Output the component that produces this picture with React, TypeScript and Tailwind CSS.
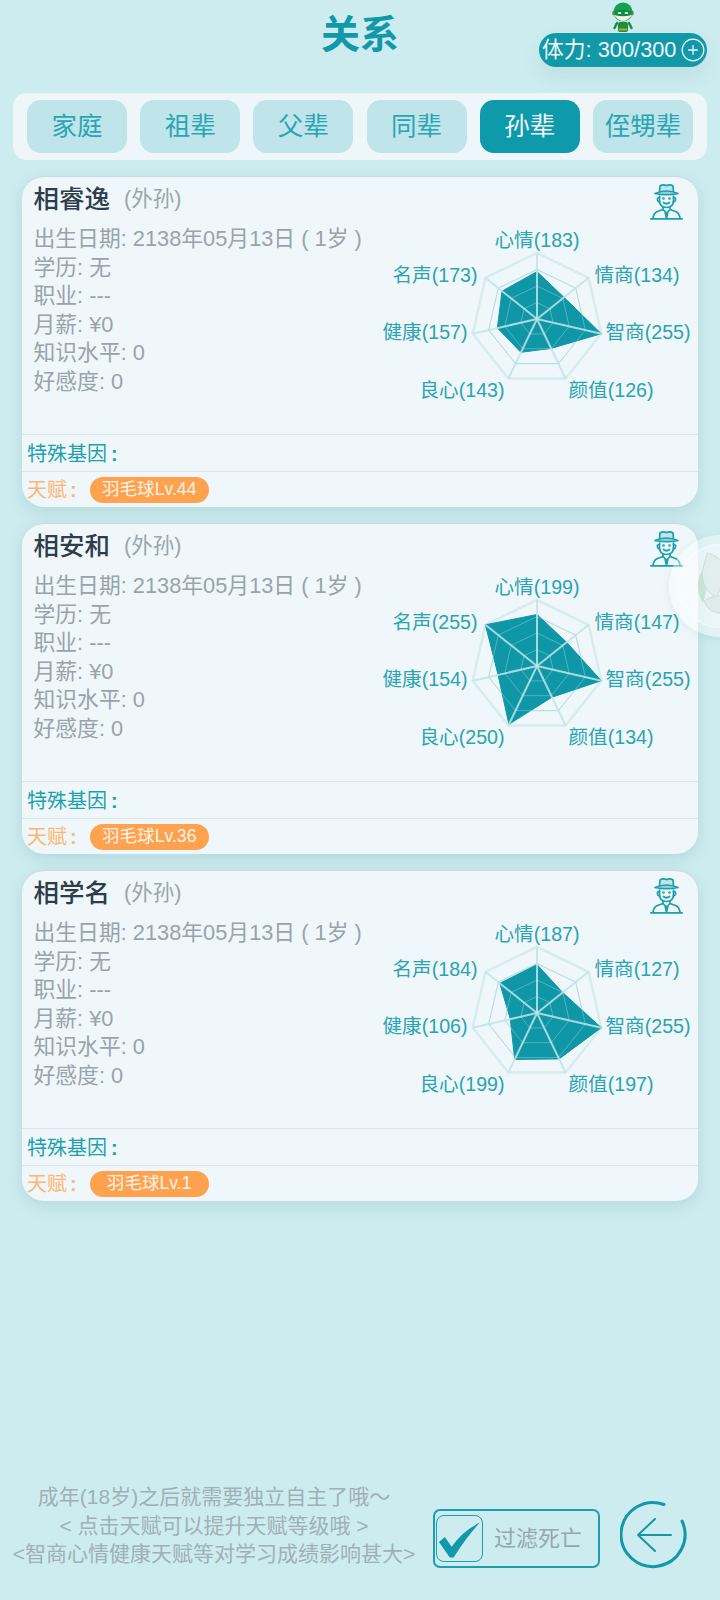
import { CirclePlus } from 'lucide-react';

const tabs = ['家庭', '祖辈', '父辈', '同辈', '孙辈', '侄甥辈'];
const axes = ['心情', '情商', '智商', '颜值', '良心', '健康', '名声'];
// label centres inside the chart box
const labelPos = [
  [169, 62.5],
  [269, 97.5],
  [280, 154.5],
  [243, 212.5],
  [94, 212.5],
  [57, 154.5],
  [67, 97.5],
];

const people = [
  { name: '相睿逸', talent: '羽毛球Lv.44', stats: [183, 134, 255, 126, 143, 157, 173] },
  { name: '相安和', talent: '羽毛球Lv.36', stats: [199, 147, 255, 134, 250, 154, 255] },
  { name: '相学名', talent: '羽毛球Lv.1', stats: [187, 127, 255, 197, 199, 106, 184] },
];

const CX = 169;
const CY = 142;
const R = 66;

function pt(i: number, f: number) {
  const a = ((-90 + (i * 360) / 7) * Math.PI) / 180;
  return `${(CX + Math.cos(a) * R * f).toFixed(1)},${(CY + Math.sin(a) * R * f).toFixed(1)}`;
}

function ring(f: number) {
  return axes.map((_, i) => pt(i, f)).join(' ');
}

function Radar({ stats }: { stats: number[] }) {
  return (
    <svg width="330" height="258" viewBox="0 0 330 258" className="shrink-0">
      <polygon points={ring(1)} fill="none" stroke="#d6ecef" strokeWidth="2.5" />
      {[0.25, 0.5, 0.75].map((f) => (
        <polygon key={f} points={ring(f)} fill="none" stroke="#d6ecef" strokeWidth="1.2" />
      ))}
      <polygon points={stats.map((v, i) => pt(i, v / 255)).join(' ')} fill="#0f97a8" stroke="#0f97a8" strokeWidth="1" />
      {[0.25, 0.5, 0.75].map((f) => (
        <polygon key={f} points={ring(f)} fill="none" stroke="#8fd0d9" strokeOpacity="0.5" strokeWidth="1" />
      ))}
      {axes.map((a, i) => (
        <polyline key={a} points={`${CX},${CY} ${pt(i, 1)}`} fill="none" stroke="#bfe4e9" strokeOpacity="0.85" strokeWidth="2" />
      ))}
      {axes.map((a, i) => (
        <text
          key={a}
          x={labelPos[i][0]}
          y={labelPos[i][1] + 7}
          textAnchor="middle"
          fontSize="19.6"
          fill="#2aa3b2"
        >
          {a}({stats[i]})
        </text>
      ))}
    </svg>
  );
}

function HatMan() {
  return (
    <svg width="33" height="37" viewBox="0 0 33 37" fill="none" stroke="#1c9fae" strokeWidth="1.7" strokeLinecap="round" strokeLinejoin="round">
      <path d="M9.5 9 L10 3 Q13 0.8 16.5 2.6 Q20 0.8 23 3 L23.5 9" fill="#bfe4e9" />
      <path d="M5 10.5 Q16.5 5.5 28 10.5 Q16.5 13 5 10.5 Z" fill="#8fd0d9" />
      <path d="M9.5 13 V17 Q9.5 24.5 16.5 24.5 Q23.5 24.5 23.5 17 V13" />
      <path d="M9.5 14.5 Q7 14.5 7.5 17 Q8 19 9.5 19 M23.5 14.5 Q26 14.5 25.5 17 Q25 19 23.5 19" />
      <path d="M13.5 19.5 Q16.5 22 19.5 19.5" />
      <path d="M13 24 V26.5 L7.5 28.5 Q3.5 30 3 35.5 M20 24 V26.5 L25.5 28.5 Q29.5 30 30 35.5" />
      <path d="M13 26.5 L16.5 30 L20 26.5 M15 28.5 L16.5 35.5 L18 28.5" />
      <path d="M0.8 35.8 H32.2" />
      <circle cx="13.5" cy="15.5" r="0.5" />
      <circle cx="19.5" cy="15.5" r="0.5" />
    </svg>
  );
}

function Sprite() {
  return (
    <svg width="26" height="31" viewBox="0 0 26 31">
      <rect x="8" y="20" width="10" height="10" rx="2" fill="#1c8f3c" />
      <rect x="9" y="26.5" width="8" height="2" fill="#c9a227" />
      <path d="M7 21 L4.5 26 M19 21 L21.5 26" stroke="#1c8f3c" strokeWidth="2.5" strokeLinecap="round" />
      <ellipse cx="3.8" cy="11" rx="1.6" ry="2.5" fill="#8a7a63" />
      <ellipse cx="22.2" cy="11" rx="1.6" ry="2.5" fill="#8a7a63" />
      <ellipse cx="13" cy="10" rx="9.5" ry="9.5" fill="#14a24c" />
      <path d="M4 13 Q13 25 22 13 Q13 15 4 13 Z" fill="#f6f1e7" />
      <path d="M4.5 9 Q13 7 21.5 9 L20 13 Q13 15.5 6 13 Z" fill="#0f8a40" />
      <ellipse cx="9.5" cy="11" rx="2" ry="1" fill="#e8f3e8" />
      <ellipse cx="16.5" cy="11" rx="2" ry="1" fill="#e8f3e8" />
    </svg>
  );
}

function PersonCard({ name, talent, stats }: { name: string; talent: string; stats: number[] }) {
  return (
    <div className="relative rounded-[22px] border-t border-[#c9d9dd] bg-[#eff7fa] shadow-[0_5px_16px_rgba(20,90,100,0.13)]">
      <div className="flex h-[257px]">
        <div className="flex-1 pl-[11.5px]">
          <div className="flex h-[45px] items-center">
            <span className="text-[25.5px] font-medium leading-none text-[#2f3c4c]">{name}</span>
            <span className="ml-[14px] text-[21.5px] leading-none text-[#9aa5ad]">(外孙)</span>
          </div>
          <div className="mt-[3px] text-[21.8px] leading-[28.6px] text-[#98a3ab]">
            <p className="whitespace-nowrap">出生日期: 2138年05月13日 ( 1岁 )</p>
            <p>学历: 无</p>
            <p>职业: ---</p>
            <p>月薪: ¥0</p>
            <p>知识水平: 0</p>
            <p>好感度: 0</p>
          </div>
        </div>
        <Radar stats={stats} />
      </div>
      <div className="absolute right-[15px] top-[6px]">
        <HatMan />
      </div>
      <div className="flex h-[37px] items-center border-t border-[#dbe7ea] pl-[5px] pt-[1px] text-[20px] text-[#1c9fae]">
        特殊基因<span className="ml-[4px] font-bold">:</span>
      </div>
      <div className="flex h-[36px] items-center border-t border-[#dbe7ea] pl-[5px]">
        <span className="pt-[1px] text-[20px] text-[#fdb672]">
          天赋<span className="ml-[3px] font-bold">:</span>
        </span>
        <span className="ml-[13px] flex h-[26px] w-[119px] items-center justify-center rounded-full bg-[#fea24f] text-[17.6px] text-[#fdf3e6]">
          {talent}
        </span>
      </div>
    </div>
  );
}

export default function App() {
  return (
    <div
      className="relative flex h-[1600px] w-[720px] flex-col overflow-hidden bg-[#cdecef]"
      style={{ fontFamily: '"Liberation Sans", "Noto Sans CJK SC", sans-serif' }}
    >
      {/* Header */}
      <header className="grid h-[93px] shrink-0 grid-cols-[1fr_auto_1fr]">
        <div />
        <h1 className="pt-[11px] text-[39px] font-bold leading-[48px] text-[#1299a9]">关系</h1>
        <div className="flex justify-end pr-[13px] pt-[33px]">
          <div className="relative flex h-[34px] w-[168px] items-center justify-between rounded-full bg-[#1299a9] pl-[3px] pr-[1px] text-[21.8px] leading-none text-[#eef8fa] shadow-[0_10px_20px_rgba(20,90,100,0.08)]">
            <span className="whitespace-nowrap">体力: 300/300</span>
            <CirclePlus size={26} strokeWidth={1.2} />
            <div className="absolute left-[71px] top-[-31px]">
              <Sprite />
            </div>
          </div>
        </div>
      </header>

      {/* Tabs */}
      <nav className="mx-[13px] flex h-[67px] shrink-0 items-center gap-[13.2px] rounded-[14px] bg-[#eef6f9] px-[14px]">
        {tabs.map((t) => (
          <div
            key={t}
            className={
              t === '孙辈'
                ? 'flex h-[53px] w-[100px] items-center justify-center rounded-[14px] bg-[#0f9aab] text-[25.5px] text-[#eef8fa]'
                : 'flex h-[53px] w-[100px] items-center justify-center rounded-[14px] bg-[#bfe5ea] text-[25.5px] text-[#2ba5b3]'
            }
          >
            {t}
          </div>
        ))}
      </nav>

      {/* Cards */}
      <main className="mx-[22px] mt-[16px] flex flex-col gap-[16px]">
        {people.map((p) => (
          <PersonCard key={p.name} {...p} />
        ))}
      </main>

      {/* Footer */}
      <footer className="mt-auto flex h-[119px] shrink-0 items-start pb-[22px]">
        <div className="w-[428px] shrink-0 pt-[2px] text-center text-[21px] leading-[28.5px] text-[#9fb0b7]">
          <p>成年(18岁)之后就需要独立自主了哦～</p>
          <p>&lt; 点击天赋可以提升天赋等级哦 &gt;</p>
          <p>&lt;智商心情健康天赋等对学习成绩影响甚大&gt;</p>
        </div>
        <div className="ml-[5px] mt-[28px] flex h-[59px] w-[167px] items-center rounded-[7px] border-2 border-[#1c9fae] pl-[1px]">
          <div className="flex h-[47px] w-[47px] items-center justify-center rounded-[8px] border-[1.5px] border-[#1c9fae]">
            <svg width="46" height="44" viewBox="0 0 46 44">
              <path d="M2 25 L8 20 L15 30 Q26 14 44 5 Q30 20 17 41 H13 Z" fill="#1299a9" />
            </svg>
          </div>
          <span className="ml-[11px] text-[22px] leading-none text-[#93a7af]">过滤死亡</span>
        </div>
        <svg width="70" height="70" viewBox="0 0 70 70" className="ml-[20px] mt-[19px] shrink-0" fill="none" stroke="#1299a9" strokeWidth="3" strokeLinecap="round" strokeLinejoin="round">
          <path d="M44 4.5 A32 32 0 1 0 62 21" />
          <path d="M51 35 H18 M35 19 L18 35 L35 51" strokeWidth="2" />
        </svg>
      </footer>

      {/* Floating ball over the second card */}
      <div className="absolute left-[669px] top-[535px] flex h-[102px] w-[102px] items-center justify-center rounded-full bg-white/40 shadow-[0_2px_10px_rgba(20,90,100,0.08)]">
        <div className="flex h-[84px] w-[84px] items-center justify-center rounded-full border border-white/50 bg-white/30">
          <svg width="70" height="70" viewBox="0 0 70 70" fill="none" className="opacity-60">
            <path d="M17 20 Q8 36 18 52 L24 30 Z" fill="#b5d9b8" />
            <path d="M22 2 Q34 4 42 18 L32 46 Q18 42 17 22 Z" fill="#dce9e4" stroke="#b8d0c8" />
            <path d="M19 50 Q24 64 40 62 L44 46 Q30 42 19 50 Z" fill="#d8e4de" stroke="#b8cdc6" />
          </svg>
        </div>
      </div>
    </div>
  );
}
